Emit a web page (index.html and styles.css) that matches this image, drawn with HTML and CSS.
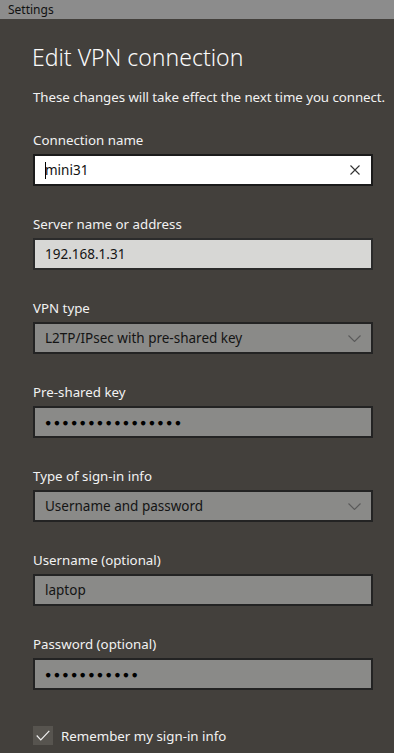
FILE: index.html
```html
<!DOCTYPE html>
<html lang="en">
<head>
    <meta charset="UTF-8">
    <meta name="viewport" content="width=device-width, initial-scale=1.0">
    <title>Settings</title>
    <link rel="stylesheet" href="styles.css">
</head>
<body>
    <div class="titlebar">Settings</div>
    <div class="content">
        <h1>Edit VPN connection</h1>
        <p class="note">These changes will take effect the next time you connect.</p>

        <div class="field">
            <div class="label">Connection name</div>
            <div class="box focus">
                <span class="caret"></span><span class="val">mini31</span>
                <svg class="clear" width="10" height="10" viewBox="0 0 10 10"><path d="M0.5 0.5L9.5 9.5M9.5 0.5L0.5 9.5" stroke="#333" stroke-width="1.1" fill="none"/></svg>
            </div>
        </div>

        <div class="field">
            <div class="label">Server name or address</div>
            <div class="box light"><span class="val">192.168.1.31</span></div>
        </div>

        <div class="field">
            <div class="label">VPN type</div>
            <div class="box">
                <span class="val">L2TP/IPsec with pre-shared key</span>
                <svg class="chev" width="13" height="7" viewBox="0 0 13 7"><path d="M0.5 0.5L6.5 6.5L12.5 0.5" stroke="#5a5a5a" stroke-width="1.1" fill="none"/></svg>
            </div>
        </div>

        <div class="field">
            <div class="label">Pre-shared key</div>
            <div class="box"><span class="val dots">&#9679;&#9679;&#9679;&#9679;&#9679;&#9679;&#9679;&#9679;&#9679;&#9679;&#9679;&#9679;&#9679;&#9679;&#9679;&#9679;</span></div>
        </div>

        <div class="field">
            <div class="label">Type of sign-in info</div>
            <div class="box">
                <span class="val">Username and password</span>
                <svg class="chev" width="13" height="7" viewBox="0 0 13 7"><path d="M0.5 0.5L6.5 6.5L12.5 0.5" stroke="#5a5a5a" stroke-width="1.1" fill="none"/></svg>
            </div>
        </div>

        <div class="field">
            <div class="label">Username (optional)</div>
            <div class="box"><span class="val">laptop</span></div>
        </div>

        <div class="field">
            <div class="label">Password (optional)</div>
            <div class="box"><span class="val dots">&#9679;&#9679;&#9679;&#9679;&#9679;&#9679;&#9679;&#9679;&#9679;&#9679;&#9679;</span></div>
        </div>

        <div class="check">
            <span class="tick">
                <svg width="14" height="11" viewBox="0 0 14 11"><path d="M0.7 5.5L4.8 9.8L13.3 0.8" stroke="#f0f0f0" stroke-width="1.2" fill="none"/></svg>
            </span>
            <span>Remember my sign-in info</span>
        </div>
    </div>
</body>
</html>
```

FILE: styles.css
```css
*{
    padding: 0;
    margin: 0;
    box-sizing: border-box;
}
body{
    background: #43403c;
    font-family: "Noto Sans", "Open Sans", sans-serif;
    color: #f2f2f2;
    width: 394px;
    height: 753px;
    overflow: hidden;
}
.titlebar{
    height: 19px;
    line-height: 19px;
    background: #8c8c8c;
    color: #111;
    font-size: 12px;
    padding-left: 8px;
}
.content{
    padding: 0 21px 0 33px;
}
h1{
    font-weight: 300;
    font-size: 23px;
    line-height: 30px;
    margin-top: 23px;
    margin-left: -1px;
    color: #fafafa;
}
.note{
    font-size: 13.3px;
    line-height: 20px;
    margin-top: 15px;
    white-space: nowrap;
    letter-spacing: -0.06px;
}
.field{
    margin-top: 23px;
}
.field + .field{
    margin-top: 28px;
}
.label{
    font-size: 13.3px;
    line-height: 20px;
    margin-bottom: 4px;
}
.box{
    display: flex;
    align-items: center;
    height: 32px;
    border: 2px solid #232323;
    background: #8a8a88;
    color: #141414;
    font-size: 13.5px;
    padding: 0 9px 0 10px;
}
.box .val{
    flex: 1;
}
.box.focus{
    background: #fff;
    border-color: #1b1b1b;
    color: #111;
}
.box.light{
    background: #d7d7d5;
    border-color: #2b2b2b;
}
.caret{
    display: inline-block;
    width: 1px;
    height: 17px;
    background: #000;
    margin-right: -1px;
}
.clear{
    margin-right: 2px;
}
.chev{
    margin-right: 1px;
}
.dots{
    font-size: 10.5px;
    letter-spacing: 2.3px;
    color: #000;
}
.check{
    display: flex;
    align-items: center;
    margin-top: 36px;
    font-size: 13.3px;
}
.tick{
    display: flex;
    align-items: center;
    justify-content: center;
    width: 20px;
    height: 19px;
    background: #57544f;
    margin-right: 8px;
}
```
